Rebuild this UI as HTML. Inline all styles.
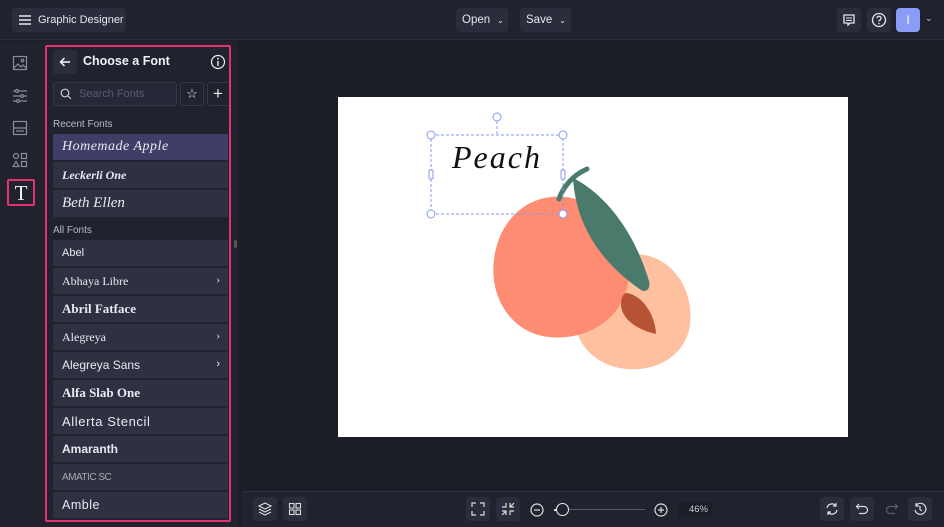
<!DOCTYPE html>
<html><head><meta charset="utf-8"><style>
*{box-sizing:border-box;margin:0;padding:0}
body{width:944px;height:527px;overflow:hidden;background:#1b1d27;font-family:"Liberation Sans",sans-serif;color:#e6e6ee;position:relative}
.abs{position:absolute}
.top{left:0;top:0;width:944px;height:40px;background:#20222e;border-bottom:1px solid #2c2f3d}
.btn{position:absolute;background:#2a2d3b;border-radius:4px;height:24px;top:8px;font-size:12px;color:#e6e6ee;display:flex;align-items:center;white-space:nowrap}
.rail{left:0;top:41px;width:42px;height:486px;background:#20222e}
.panel{left:42px;top:41px;width:196px;height:486px;background:#20222e}
.pb{left:45px;top:45px;width:186px;height:477px;border:2px solid #e2336e;border-radius:2px}
.row{position:absolute;left:53px;width:175px;height:26px;background:#2e3142;color:#e9e9f0;display:flex;align-items:center;padding-left:9px;font-size:12px;white-space:nowrap}
.chev{position:absolute;right:8px;top:6px;font-size:11px}
.lbl{position:absolute;left:53px;font-size:10px;color:#b8bac6}
.bot{left:242px;top:491px;width:702px;height:36px;background:#20222e;border-top:1px solid #2c2f3d}
.ib{position:absolute;width:24px;height:24px;background:#2a2d3b;border-radius:4px;top:6px;display:flex;align-items:center;justify-content:center}
</style></head><body>
<div class="abs top"></div>
<div class="btn" style="left:12px;width:114px;padding-left:6px">
<svg width="14" height="12" viewBox="0 0 14 12"><path d="M1 2h12M1 6h12M1 10h12" stroke="#e6e6ee" stroke-width="1.4"/></svg>
<span style="margin-left:6px;font-size:11px">Graphic Designer</span></div>
<div class="btn" style="left:456px;width:52px;padding-left:6px;font-size:11.5px">Open <span style="margin-left:7px;font-size:8px">&#8964;</span></div>
<div class="btn" style="left:520px;width:51px;padding-left:6px;font-size:11.5px">Save <span style="margin-left:7px;font-size:8px">&#8964;</span></div>
<div class="btn" style="left:837px;width:24px;justify-content:center"><svg width="14" height="14" viewBox="0 0 14 14"><path d="M2 2h10v8H8l-2 2v-2H2z" fill="none" stroke="#e6e6ee" stroke-width="1.3"/><path d="M4 5h6M4 7.5h6" stroke="#e6e6ee"/></svg></div>
<div class="btn" style="left:867px;width:24px;justify-content:center"><svg width="16" height="16" viewBox="0 0 16 16"><circle cx="8" cy="8" r="6.5" fill="none" stroke="#e6e6ee" stroke-width="1.3"/><path d="M6 6.3a2 2 0 1 1 2.5 1.9c-.5.2-.5.6-.5 1.3" fill="none" stroke="#e6e6ee" stroke-width="1.3"/><circle cx="8" cy="11.5" r=".8" fill="#e6e6ee"/></svg></div>
<div class="btn" style="left:896px;width:24px;justify-content:center;background:#8a9cf5;color:#fff">I</div>
<div class="abs" style="left:925px;top:13px;font-size:9px;color:#ccc">&#8964;</div>

<div class="abs rail"></div>
<svg class="abs" style="left:12px;top:55px" width="16" height="16" viewBox="0 0 16 16" fill="none" stroke="#8a8d9c" stroke-width="1.2"><rect x="1.5" y="1.5" width="13" height="13"/><path d="M2 13l4-4 3 3 2-2 3 3"/><circle cx="10.5" cy="5.5" r="1.3"/></svg>
<svg class="abs" style="left:12px;top:88px" width="16" height="16" viewBox="0 0 16 16" fill="none" stroke="#8a8d9c" stroke-width="1.2"><path d="M1 3h14M1 8h14M1 13h14"/><circle cx="5" cy="3" r="1.5" fill="#20222e"/><circle cx="10" cy="8" r="1.5" fill="#20222e"/><circle cx="6" cy="13" r="1.5" fill="#20222e"/></svg>
<svg class="abs" style="left:12px;top:120px" width="16" height="16" viewBox="0 0 16 16" fill="none" stroke="#8a8d9c" stroke-width="1.2"><rect x="1.5" y="1.5" width="13" height="13"/><path d="M1.5 8h13M4 11h8"/></svg>
<svg class="abs" style="left:12px;top:152px" width="16" height="16" viewBox="0 0 16 16" fill="none" stroke="#8a8d9c" stroke-width="1.2"><circle cx="4" cy="4" r="2.5"/><rect x="9.5" y="1.5" width="5" height="5"/><path d="M4 9.5l3 5H1z"/><rect x="9.5" y="9.5" width="5" height="5"/></svg>
<div class="abs" style="left:7px;top:179px;width:28px;height:27px;border:2px solid #e2336e;border-radius:2px;background:#20222e"></div>
<div class="abs" style="left:11px;top:181px;width:20px;font-family:'Liberation Serif',serif;font-size:21px;color:#f0f0f4;text-align:center">T</div>

<div class="abs panel"></div>
<div class="abs pb"></div>
<div class="abs" style="left:53px;top:50px;width:24px;height:24px;background:#2a2d3b;border-radius:3px;display:flex;align-items:center;justify-content:center"><svg width="12" height="10" viewBox="0 0 12 10"><path d="M11 5H1.5M5.5 1L1.5 5l4 4" fill="none" stroke="#fff" stroke-width="1.4"/></svg></div>
<div class="abs" style="left:83px;top:54px;font-size:12.5px;font-weight:bold;color:#f2f2f6">Choose a Font</div>
<svg class="abs" style="left:210px;top:54px" width="16" height="16" viewBox="0 0 16 16"><circle cx="8" cy="8" r="6.5" fill="none" stroke="#eee" stroke-width="1.2"/><path d="M8 7v5" stroke="#eee" stroke-width="1.4"/><circle cx="8" cy="4.7" r=".9" fill="#eee"/></svg>
<div class="abs" style="left:53px;top:82px;width:124px;height:24px;border:1px solid #34374a;border-radius:3px;background:#262837"></div>
<svg class="abs" style="left:60px;top:88px" width="12" height="12" viewBox="0 0 12 12"><circle cx="5" cy="5" r="3.8" fill="none" stroke="#ccc" stroke-width="1.2"/><path d="M8 8l3 3" stroke="#ccc" stroke-width="1.2"/></svg>
<div class="abs" style="left:79px;top:88px;font-size:11px;color:#5a5d70">Search Fonts</div>
<div class="abs" style="left:180px;top:82px;width:24px;height:24px;border:1px solid #34374a;border-radius:3px;display:flex;align-items:center;justify-content:center;color:#eee;font-size:13px">&#9734;</div>
<div class="abs" style="left:207px;top:82px;width:22px;height:24px;border:1px solid #34374a;border-right:none;border-radius:3px 0 0 3px;color:#eee;font-size:17px;line-height:21px;padding-left:5px">+</div>
<div class="lbl" style="top:119px">Recent Fonts</div>
<div class="row" style="top:134px;background:#403e66;font-family:'Liberation Serif',serif;font-style:italic;font-size:14px;letter-spacing:.5px">Homemade Apple</div>
<div class="row" style="top:162px;font-family:'Liberation Serif',serif;font-style:italic;font-weight:bold;font-size:12px">Leckerli One</div>
<div class="row" style="top:190px;height:27px;font-family:'Liberation Serif',serif;font-style:italic;font-size:15px">Beth Ellen</div>
<div class="lbl" style="top:225px">All Fonts</div>
<div class="row" style="top:240px;font-size:11px">Abel</div>
<div class="row" style="top:268px;font-family:'Liberation Serif',serif;font-size:12px">Abhaya Libre<span class="chev">&#8250;</span></div>
<div class="row" style="top:296px;font-family:'Liberation Serif',serif;font-weight:bold;font-size:13px">Abril Fatface</div>
<div class="row" style="top:324px;font-family:'Liberation Serif',serif;font-size:12px">Alegreya<span class="chev">&#8250;</span></div>
<div class="row" style="top:352px;font-size:12px">Alegreya Sans<span class="chev">&#8250;</span></div>
<div class="row" style="top:380px;font-family:'Liberation Serif',serif;font-weight:bold;font-size:13px">Alfa Slab One</div>
<div class="row" style="top:408px;font-size:13px;letter-spacing:.6px">Allerta Stencil</div>
<div class="row" style="top:436px;font-weight:bold;font-size:12px">Amaranth</div>
<div class="row" style="top:464px;font-size:10px;color:#aaa;letter-spacing:-.5px">AMATIC SC</div>
<div class="row" style="top:492px;font-size:12.5px;letter-spacing:.5px">Amble</div>
<div class="abs" style="left:234px;top:240px;width:3px;height:8px;background:#555;border-radius:2px"></div>

<div class="abs" style="left:338px;top:97px;width:510px;height:340px;background:#fff"></div>
<svg class="abs" style="left:338px;top:97px" width="510" height="340" viewBox="338 97 510 340">
<path d="M636 254c40 2 58 40 54 70-4 35-40 50-70 44-30-6-50-30-45-65 5-32 30-51 61-49z" fill="#fec09e"/>
<path d="M565 197c40 4 68 40 64 80-4 42-42 64-80 60-38-4-60-40-55-78 5-40 35-66 71-62z" fill="#fe8c72"/>
<path d="M559 199c4-12 14-24 28-30" stroke="#4a7a6c" stroke-width="5" fill="none" stroke-linecap="round"/>
<path d="M573 178c30 15 60 50 76 103 2 8-3 12-8 9-35-24-65-60-68-112z" fill="#4a7a6c"/>
<path d="M627 293c14 2 28 20 29 41-18-4-34-14-35-29 0-7 2-12 6-12z" fill="#b65334"/>
<rect x="431" y="135" width="132" height="79" fill="none" stroke="#8899ee" stroke-dasharray="3,2"/>
<path d="M497 121v14" stroke="#8899ee" stroke-dasharray="3,2"/>
<g fill="#fff" stroke="#8899ee"><circle cx="497" cy="117" r="4"/><circle cx="431" cy="135" r="4"/><circle cx="563" cy="135" r="4"/><circle cx="431" cy="214" r="4"/><circle cx="563" cy="214" r="4"/><rect x="429" y="170" width="4" height="9" rx="1"/><rect x="561" y="170" width="4" height="9" rx="1"/></g>
<text x="452" y="168" font-family="Liberation Serif,serif" font-style="italic" font-size="32" fill="#111" letter-spacing="2">Peach</text>
</svg>

<div class="abs bot"></div>
<div class="ib" style="left:253px;top:497px"><svg width="14" height="14" viewBox="0 0 14 14" fill="none" stroke="#ddd" stroke-width="1.1"><path d="M7 1l6 3-6 3-6-3z"/><path d="M1 7l6 3 6-3M1 10l6 3 6-3"/></svg></div>
<div class="ib" style="left:283px;top:497px"><svg width="14" height="14" viewBox="0 0 14 14" fill="none" stroke="#ddd" stroke-width="1.1"><rect x="1.5" y="1.5" width="4.5" height="4.5"/><rect x="8" y="1.5" width="4.5" height="4.5"/><rect x="1.5" y="8" width="4.5" height="4.5"/><rect x="8" y="8" width="4.5" height="4.5"/></svg></div>
<div class="ib" style="left:466px;top:497px"><svg width="14" height="14" viewBox="0 0 14 14" fill="none" stroke="#ddd" stroke-width="1.2"><path d="M1 5V1h4M9 1h4v4M13 9v4H9M5 13H1V9"/></svg></div>
<div class="ib" style="left:496px;top:497px"><svg width="14" height="14" viewBox="0 0 14 14" fill="none" stroke="#ddd" stroke-width="1.2"><path d="M1 5h4V1M9 1v4h4M13 9H9v4M5 13V9H1M9 5l4-4M5 9l-4 4"/></svg></div>
<svg class="abs" style="left:530px;top:503px" width="14" height="14" viewBox="0 0 14 14" fill="none" stroke="#ddd" stroke-width="1.2"><circle cx="7" cy="7" r="6"/><path d="M4 7h6"/></svg>
<div class="abs" style="left:560px;top:509px;width:85px;height:1px;background:#555a6c"></div>
<div class="abs" style="left:554px;top:509px;width:6px;height:1.5px;background:#ddd"></div>
<div class="abs" style="left:556px;top:503px;width:13px;height:13px;border:1.5px solid #eee;border-radius:50%;background:#20222e"></div>
<svg class="abs" style="left:654px;top:503px" width="14" height="14" viewBox="0 0 14 14" fill="none" stroke="#ddd" stroke-width="1.2"><circle cx="7" cy="7" r="6"/><path d="M4 7h6M7 4v6"/></svg>
<div class="abs" style="left:678px;top:502px;width:34px;height:15px;background:#1b1d27;border-radius:2px;font-size:9.5px;color:#ccc;text-align:right;padding-right:4px;line-height:15px">46%</div>
<div class="ib" style="left:820px;top:497px"><svg width="14" height="14" viewBox="0 0 14 14" fill="none" stroke="#ddd" stroke-width="1.2"><path d="M2 6a5 5 0 0 1 9-2M12 8a5 5 0 0 1-9 2M11 1v3H8M3 13v-3h3"/></svg></div>
<div class="ib" style="left:850px;top:497px"><svg width="14" height="14" viewBox="0 0 14 14" fill="none" stroke="#ddd" stroke-width="1.2"><path d="M4 2L1.5 4.5 4 7M1.5 4.5H9a3.5 3.5 0 0 1 0 7H4"/></svg></div>
<div class="ib" style="left:880px;top:497px;background:none"><svg width="14" height="14" viewBox="0 0 14 14" fill="none" stroke="#5a5d6c" stroke-width="1.2"><path d="M10 2l2.5 2.5L10 7M12.5 4.5H5a3.5 3.5 0 0 0 0 7h5"/></svg></div>
<div class="ib" style="left:908px;top:497px"><svg width="14" height="14" viewBox="0 0 14 14" fill="none" stroke="#ddd" stroke-width="1.2"><path d="M3 3.5A5.5 5.5 0 1 1 2 8M3 1v3h3M7 4v3.5l2 1.5"/></svg></div>
</body></html>
